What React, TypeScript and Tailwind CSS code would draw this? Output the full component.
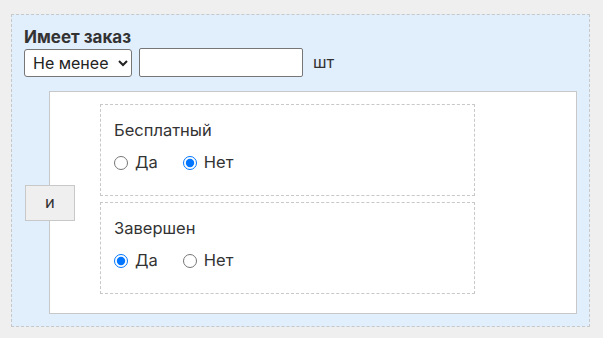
import { useState } from "react";

type YesNo = "yes" | "no";

function Condition({ title, name, value, onChange }: { title: string; name: string; value: YesNo; onChange: (v: YesNo) => void }) {
  return (
    <div className="h-[92px] border border-dashed border-[#c8c8c8] pl-[13px] pt-[16px]">
      <div className="leading-[19px]">{title}</div>
      <div className="mt-[13px] flex items-center leading-[19px]">
        <label className="flex items-center gap-[7px]">
          <input type="radio" name={name} className="m-0 h-[14px] w-[14px]" checked={value === "yes"} onChange={() => onChange("yes")} />
          <span>Да</span>
        </label>
        <label className="ml-[25px] flex items-center gap-[7px]">
          <input type="radio" name={name} className="m-0 h-[14px] w-[14px]" checked={value === "no"} onChange={() => onChange("no")} />
          <span>Нет</span>
        </label>
      </div>
    </div>
  );
}

export default function App() {
  const [free, setFree] = useState<YesNo>("no");
  const [done, setDone] = useState<YesNo>("yes");

  return (
    <div className="min-h-[338px] bg-[#efefef] px-[11px] pt-[14px] font-['Inter',sans-serif] text-[16.5px] text-[#333]">
      <div className="w-[579px] border border-dashed border-[#c8c8c8] bg-[#e1eefc] pb-[12px] pl-[12px] pr-[12px] pt-[13px]">
        <div className="text-[17px] font-bold leading-[19px]">Имеет заказ</div>
        <div className="mt-[1px] flex items-center">
          <select className="h-[28px] w-[108px] rounded-[3px] border border-[#767676] bg-white pl-[4px] text-[16px] text-[#222]">
            <option>Не менее</option>
            <option>Не более</option>
            <option>Ровно</option>
          </select>
          <input type="text" className="ml-[7px] h-[29px] w-[164px] rounded-[2px] border border-[#767676] bg-white" />
          <span className="ml-[10px]">шт</span>
        </div>

        <div className="mt-[14px] flex items-center">
          {/* group operator */}
          <button className="relative z-10 -mr-[26px] ml-px h-[36px] w-[50px] border border-[#c8c8c8] bg-[#efefef] text-[#333]">
            и
          </button>
          <div className="flex flex-1 flex-col gap-[6px] border border-[#c8c8c8] bg-white pb-[19px] pl-[50px] pt-[12px]">
            <div className="w-[375px]">
              <Condition title="Бесплатный" name="free" value={free} onChange={setFree} />
            </div>
            <div className="w-[375px]">
              <Condition title="Завершен" name="done" value={done} onChange={setDone} />
            </div>
          </div>
        </div>
      </div>
    </div>
  );
}
